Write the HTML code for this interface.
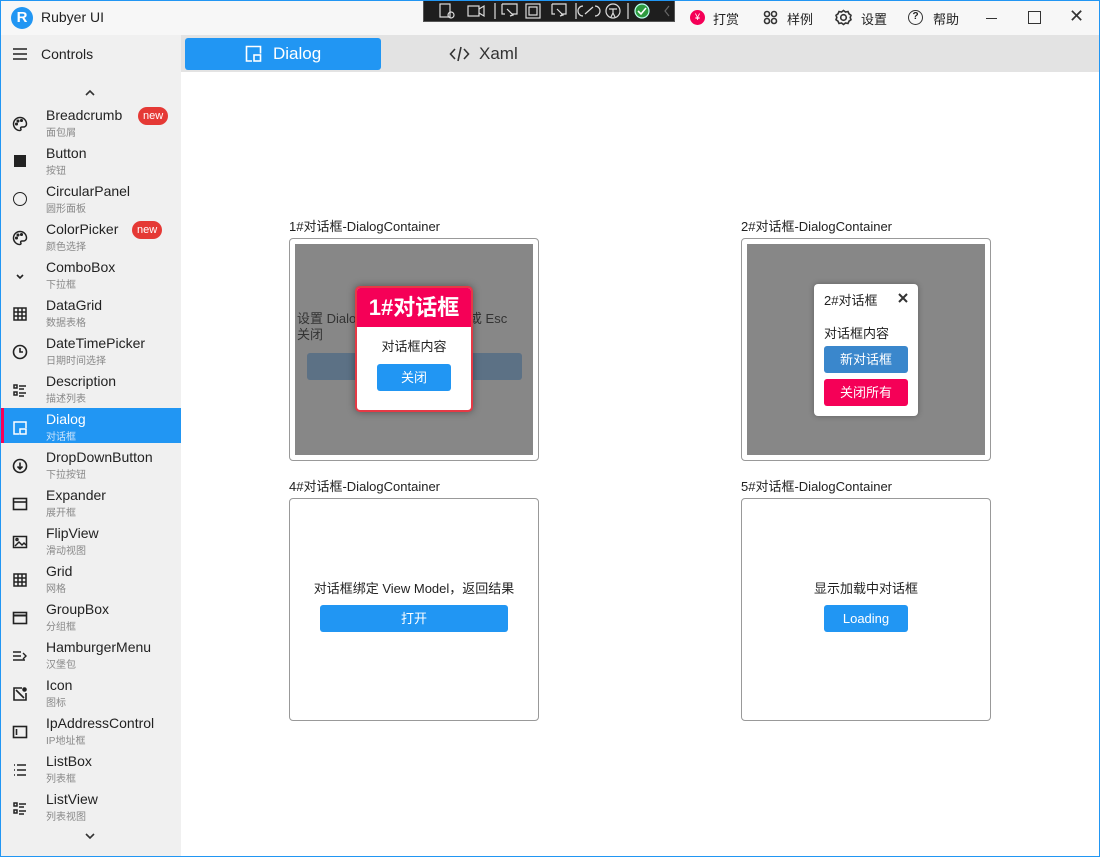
<!DOCTYPE html>
<html><head><meta charset="utf-8"><style>
*{box-sizing:border-box;margin:0;padding:0}
body{width:1100px;height:857px;overflow:hidden;font-family:"Liberation Sans","Noto Sans CJK SC",sans-serif;color:#222;background:#fff;position:relative}
.a{position:absolute}
.frame{left:0;top:0;width:1100px;height:857px;border:1px solid #2196f3;z-index:50;pointer-events:none}
.title{left:0;top:0;width:1100px;height:35px;background:#f7f7f7}
.side{left:0;top:35px;width:181px;height:822px;background:#f0f0f0}
.tabs{left:181px;top:35px;width:919px;height:37px;background:#e3e3e3}
.item{position:absolute;left:0;width:181px;height:36px}
.item .n{position:absolute;left:46px;top:3px;font-size:14px;color:#222}
.item .s{position:absolute;left:46px;top:20px;font-size:10px;color:#888}
.item .ic{position:absolute;left:12px;top:12px;width:16px;height:16px}
.badge{position:absolute;background:#e53935;color:#fff;font-size:11px;border-radius:9px;padding:1px 5px;height:18px;line-height:16px}
.lbl{font-size:13px;color:#222}
.card{border:1px solid #999;border-radius:4px;background:#fff}
.gray{background:#878787}
.btn{border-radius:3px;color:#fff;font-size:13px;text-align:center}
</style></head><body>
<div class="a title"></div>
<div class="a" style="left:11px;top:7px;width:22px;height:22px;border-radius:50%;background:#2196f3;color:#fff;font-weight:bold;font-size:15px;text-align:center;line-height:22px">R</div>
<div class="a" style="left:41px;top:9px;font-size:14px">Rubyer UI</div>
<div class="a" style="left:423px;top:0;width:252px;height:22px;background:#1e1e1e;border:1px solid #555"></div>
<svg class="a" style="left:423px;top:0" width="252" height="22" fill="none" stroke="#ddd" stroke-width="1.2">
<rect x="17" y="4" width="10" height="13"/><circle cx="28" cy="15" r="3"/>
<rect x="45" y="6" width="11" height="10"/><path d="M56 9l5-3v10l-5-3"/>
<path d="M72 3v16"/><path d="M79 4h15v10h-5M79 4v10h3"/><path d="M84 9l6 6-3 1"/>
<rect x="103" y="4" width="14" height="14"/><rect x="106" y="7" width="8" height="8"/>
<path d="M129 4h14v10h-5M129 4v10h3"/><path d="M134 9l6 6-3 1"/>
<path d="M153 3v16"/><path d="M160 6a5 5 0 0 0 0 10M172 6a5 5 0 0 1 0 10M162 14l8-7"/>
<circle cx="190" cy="11" r="7"/><path d="M186 9h8M190 9v4l-2 4M190 13l2 4"/>
<path d="M205 3v16"/><circle cx="219" cy="11" r="7" fill="#2e9a3f" stroke="#bfe"/><path d="M215 11l3 3 5-6" stroke="#fff" stroke-width="1.6"/>
<path d="M246 6l-4 5 4 5" stroke="#666"/>
</svg>
<div class="a" style="left:690px;top:10px;width:15px;height:15px;border-radius:50%;background:#f50057;color:#fff;font-size:9px;text-align:center;line-height:15px">¥</div>
<div class="a" style="left:713px;top:9px;font-size:13px">打赏</div>
<svg class="a" style="left:763px;top:10px" width="15" height="15" fill="none" stroke="#333" stroke-width="1.6"><circle cx="4" cy="4" r="2.5"/><circle cx="11" cy="4" r="2.5"/><circle cx="4" cy="11" r="2.5"/><circle cx="11" cy="11" r="2.5"/></svg>
<div class="a" style="left:787px;top:9px;font-size:13px">样例</div>
<svg class="a" style="left:835px;top:9px" width="17" height="17" fill="none" stroke="#333" stroke-width="1.6"><circle cx="8.5" cy="8.5" r="2.8"/><path d="M8.5 1.5l2 1.5 2.5-.5 1 2.3 2 1.5-.8 2.2.8 2.2-2 1.5-1 2.3-2.5-.5-2 1.5-2-1.5-2.5.5-1-2.3-2-1.5.8-2.2-.8-2.2 2-1.5 1-2.3 2.5.5z"/></svg>
<div class="a" style="left:861px;top:9px;font-size:13px">设置</div>
<div class="a" style="left:908px;top:10px;width:15px;height:15px;border:1.5px solid #333;border-radius:50%;font-size:10px;text-align:center;line-height:12px;font-weight:bold">?</div>
<div class="a" style="left:933px;top:9px;font-size:13px">帮助</div>
<div class="a" style="left:986px;top:18px;width:11px;height:1px;background:#333"></div>
<div class="a" style="left:1028px;top:11px;width:13px;height:13px;border:1.5px solid #333"></div>
<div class="a" style="left:1069px;top:6px;font-size:18px;color:#333">✕</div>

<div class="a side"></div>
<svg class="a" style="left:13px;top:47px" width="14" height="14" stroke="#222" stroke-width="1.5"><path d="M0 2h14M0 7h14M0 12h14"/></svg>
<div class="a" style="left:41px;top:46px;font-size:14px">Controls</div>
<svg class="a" style="left:85px;top:89px" width="10" height="7" fill="none" stroke="#333" stroke-width="1.6"><path d="M1 6l4-4 4 4"/></svg>

<div class="item" style="top:104px"><svg class="ic" viewBox="0 0 16 16" fill="none" stroke="#222" stroke-width="1.5"><path d="M8 1.5a6.5 6.5 0 0 0 0 13c1 0 1.2-1 .8-1.7-.5-.8 0-1.8 1-1.8h1.7a3 3 0 0 0 3-3C14.5 4.3 11.6 1.5 8 1.5z"/><circle cx="4.5" cy="8" r=".8"/><circle cx="6" cy="5" r=".8"/><circle cx="9.5" cy="4.5" r=".8"/></svg><div class="n">Breadcrumb</div><div class="s">面包屑</div><div class="badge" style="left:138px;top:3px">new</div></div>
<div class="item" style="top:142px"><div class="ic" style="left:14px;top:13px;width:12px;height:12px;background:#222"></div><div class="n">Button</div><div class="s">按钮</div></div>
<div class="item" style="top:180px"><div class="ic" style="left:13px;top:12px;width:14px;height:14px;border:1.5px solid #222;border-radius:50%"></div><div class="n">CircularPanel</div><div class="s">圆形面板</div></div>
<div class="item" style="top:218px"><svg class="ic" viewBox="0 0 16 16" fill="none" stroke="#222" stroke-width="1.5"><path d="M8 1.5a6.5 6.5 0 0 0 0 13c1 0 1.2-1 .8-1.7-.5-.8 0-1.8 1-1.8h1.7a3 3 0 0 0 3-3C14.5 4.3 11.6 1.5 8 1.5z"/><circle cx="4.5" cy="8" r=".8"/><circle cx="6" cy="5" r=".8"/><circle cx="9.5" cy="4.5" r=".8"/></svg><div class="n">ColorPicker</div><div class="s">颜色选择</div><div class="badge" style="left:132px;top:3px">new</div></div>
<div class="item" style="top:256px"><svg class="ic" viewBox="0 0 16 16" fill="none" stroke="#222" stroke-width="1.6"><path d="M5 7l3 3 3-3"/></svg><div class="n">ComboBox</div><div class="s">下拉框</div></div>
<div class="item" style="top:294px"><svg class="ic" viewBox="0 0 16 16" fill="none" stroke="#222" stroke-width="1.5"><rect x="2" y="2" width="12" height="12"/><path d="M6 2v12M10 2v12M2 6h12M2 10h12"/></svg><div class="n">DataGrid</div><div class="s">数据表格</div></div>
<div class="item" style="top:332px"><svg class="ic" viewBox="0 0 16 16" fill="none" stroke="#222" stroke-width="1.6"><circle cx="8" cy="8" r="6.5"/><path d="M8 4v4h3"/></svg><div class="n">DateTimePicker</div><div class="s">日期时间选择</div></div>
<div class="item" style="top:370px"><svg class="ic" viewBox="0 0 16 16" fill="none" stroke="#222" stroke-width="1.5"><rect x="2" y="3" width="3" height="3"/><rect x="2" y="10" width="3" height="3"/><path d="M7 4h7M7 7h5M7 11h7M7 14h5"/></svg><div class="n">Description</div><div class="s">描述列表</div></div>
<div class="item" style="top:408px;background:#2196f3;height:35px"><div class="a" style="left:1px;top:0;width:3px;height:35px;background:#f50057"></div><svg class="ic" viewBox="0 0 16 16" fill="none" stroke="#fff" stroke-width="1.5"><path d="M7 14H2V2h12v6"/><rect x="8" y="9" width="6" height="5"/></svg><div class="n" style="color:#fff">Dialog</div><div class="s" style="color:#cfe6fb">对话框</div></div>
<div class="item" style="top:446px"><svg class="ic" viewBox="0 0 16 16" fill="none" stroke="#222" stroke-width="1.6"><circle cx="8" cy="8" r="6.5"/><path d="M8 4.5v6M5.5 8.5L8 11l2.5-2.5"/></svg><div class="n">DropDownButton</div><div class="s">下拉按钮</div></div>
<div class="item" style="top:484px"><svg class="ic" viewBox="0 0 16 16" fill="none" stroke="#222" stroke-width="1.6"><rect x="1.5" y="2.5" width="13" height="11"/><path d="M1.5 6h13"/></svg><div class="n">Expander</div><div class="s">展开框</div></div>
<div class="item" style="top:522px"><svg class="ic" viewBox="0 0 16 16" fill="none" stroke="#222" stroke-width="1.5"><rect x="1.5" y="2.5" width="13" height="11"/><path d="M3 12l4-4 3 3 2-2 2 2"/><circle cx="5" cy="5.5" r="1"/></svg><div class="n">FlipView</div><div class="s">滑动视图</div></div>
<div class="item" style="top:560px"><svg class="ic" viewBox="0 0 16 16" fill="none" stroke="#222" stroke-width="1.5"><rect x="2" y="2" width="12" height="12"/><path d="M6 2v12M10 2v12M2 6h12M2 10h12"/></svg><div class="n">Grid</div><div class="s">网格</div></div>
<div class="item" style="top:598px"><svg class="ic" viewBox="0 0 16 16" fill="none" stroke="#222" stroke-width="1.6"><rect x="1.5" y="2.5" width="13" height="11"/><path d="M1.5 5.5h13" stroke-width="2"/></svg><div class="n">GroupBox</div><div class="s">分组框</div></div>
<div class="item" style="top:636px"><svg class="ic" viewBox="0 0 16 16" fill="none" stroke="#222" stroke-width="1.4"><path d="M1 4h8M1 8h8M1 12h12M11 5l3 3-3 3"/></svg><div class="n">HamburgerMenu</div><div class="s">汉堡包</div></div>
<div class="item" style="top:674px"><svg class="ic" viewBox="0 0 16 16" fill="none" stroke="#222" stroke-width="1.6"><path d="M10 2H2v12h12V7"/><path d="M4 4l8 8"/><circle cx="12.5" cy="3.5" r="1.5" fill="#222"/></svg><div class="n">Icon</div><div class="s">图标</div></div>
<div class="item" style="top:712px"><svg class="ic" viewBox="0 0 16 16" fill="none" stroke="#222" stroke-width="1.6"><rect x="1.5" y="2.5" width="13" height="11"/><path d="M4.5 5v6"/></svg><div class="n">IpAddressControl</div><div class="s">IP地址框</div></div>
<div class="item" style="top:750px"><svg class="ic" viewBox="0 0 16 16" fill="none" stroke="#222" stroke-width="1.5"><path d="M2 3h1M2 8h1M2 13h1M5 3h9M5 8h9M5 13h9"/></svg><div class="n">ListBox</div><div class="s">列表框</div></div>
<div class="item" style="top:788px"><svg class="ic" viewBox="0 0 16 16" fill="none" stroke="#222" stroke-width="1.5"><rect x="2" y="3" width="3" height="3"/><rect x="2" y="10" width="3" height="3"/><path d="M7 4h7M7 7h5M7 11h7M7 14h5"/></svg><div class="n">ListView</div><div class="s">列表视图</div></div>
<svg class="a" style="left:84px;top:832px" width="12" height="8" fill="none" stroke="#333" stroke-width="1.6"><path d="M2 2l4 4 4-4"/></svg>

<div class="a tabs"></div>
<div class="a" style="left:185px;top:38px;width:196px;height:32px;background:#2196f3;border-radius:3px"></div>
<svg class="a" style="left:245px;top:45px" width="18" height="18" fill="none" stroke="#fff" stroke-width="1.6"><path d="M7 16H1.5V1.5h14v7"/><rect x="9" y="10" width="6.5" height="6"/></svg>
<div class="a" style="left:273px;top:44px;font-size:17px;color:#fff">Dialog</div>
<svg class="a" style="left:449px;top:45px" width="21" height="18" fill="none" stroke="#333" stroke-width="1.6"><path d="M6 4L1.5 9 6 14M15 4l4.5 5L15 14M12 2L9 16"/></svg>
<div class="a" style="left:479px;top:44px;font-size:17px;color:#333">Xaml</div>

<!-- Card 1 -->
<div class="a lbl" style="left:289px;top:216px">1#对话框-DialogContainer</div>
<div class="a card" style="left:289px;top:238px;width:250px;height:223px"></div>
<div class="a gray" style="left:295px;top:244px;width:238px;height:211px"></div>
<div class="a" style="left:297px;top:311px;font-size:13px;color:#333;width:240px;line-height:16px">设置 Dialog&nbsp;&nbsp;&nbsp;&nbsp;&nbsp;&nbsp;&nbsp;&nbsp;&nbsp;&nbsp;&nbsp;&nbsp;&nbsp;&nbsp;&nbsp;&nbsp;&nbsp;&nbsp;&nbsp;&nbsp;&nbsp;&nbsp;背景或 Esc<br>关闭</div>
<div class="a" style="left:307px;top:353px;width:215px;height:27px;background:#5c7185;border-radius:3px"></div>
<div class="a" style="left:355px;top:286px;width:118px;height:126px;background:#fff;border:2px solid #e53945;border-radius:5px;overflow:hidden;box-shadow:0 0 8px rgba(0,0,0,.4)">
<div style="height:39px;background:#f50057;color:#fff;font-weight:bold;font-size:22px;text-align:center;line-height:39px">1#对话框</div>
<div style="text-align:center;font-size:13px;margin-top:9px">对话框内容</div>
<div class="btn" style="margin:9px auto 0;width:74px;height:27px;line-height:27px;background:#2196f3">关闭</div>
</div>

<!-- Card 2 -->
<div class="a lbl" style="left:741px;top:216px">2#对话框-DialogContainer</div>
<div class="a card" style="left:741px;top:238px;width:250px;height:223px"></div>
<div class="a gray" style="left:747px;top:244px;width:238px;height:211px"></div>
<div class="a" style="left:814px;top:284px;width:104px;height:132px;background:#fff;border-radius:4px;box-shadow:0 0 6px rgba(0,0,0,.3)"></div>
<div class="a" style="left:824px;top:290px;font-size:13px">2#对话框</div>
<svg class="a" style="left:898px;top:293px" width="10" height="10" stroke="#333" stroke-width="2"><path d="M1 1l8 8M9 1L1 9"/></svg>
<div class="a" style="left:824px;top:323px;font-size:13px">对话框内容</div>
<div class="a btn" style="left:824px;top:346px;width:84px;height:27px;line-height:27px;background:#3a87cc">新对话框</div>
<div class="a btn" style="left:824px;top:379px;width:84px;height:27px;line-height:27px;background:#f50057">关闭所有</div>

<!-- Card 4 -->
<div class="a lbl" style="left:289px;top:476px">4#对话框-DialogContainer</div>
<div class="a card" style="left:289px;top:498px;width:250px;height:223px"></div>
<div class="a" style="left:289px;top:578px;width:250px;text-align:center;font-size:13px">对话框绑定 View Model，返回结果</div>
<div class="a btn" style="left:320px;top:605px;width:188px;height:27px;line-height:27px;background:#2196f3">打开</div>

<!-- Card 5 -->
<div class="a lbl" style="left:741px;top:476px">5#对话框-DialogContainer</div>
<div class="a card" style="left:741px;top:498px;width:250px;height:223px"></div>
<div class="a" style="left:741px;top:578px;width:250px;text-align:center;font-size:13px">显示加载中对话框</div>
<div class="a btn" style="left:824px;top:605px;width:84px;height:27px;line-height:27px;background:#2196f3">Loading</div>

<div class="a frame"></div>
</body></html>
